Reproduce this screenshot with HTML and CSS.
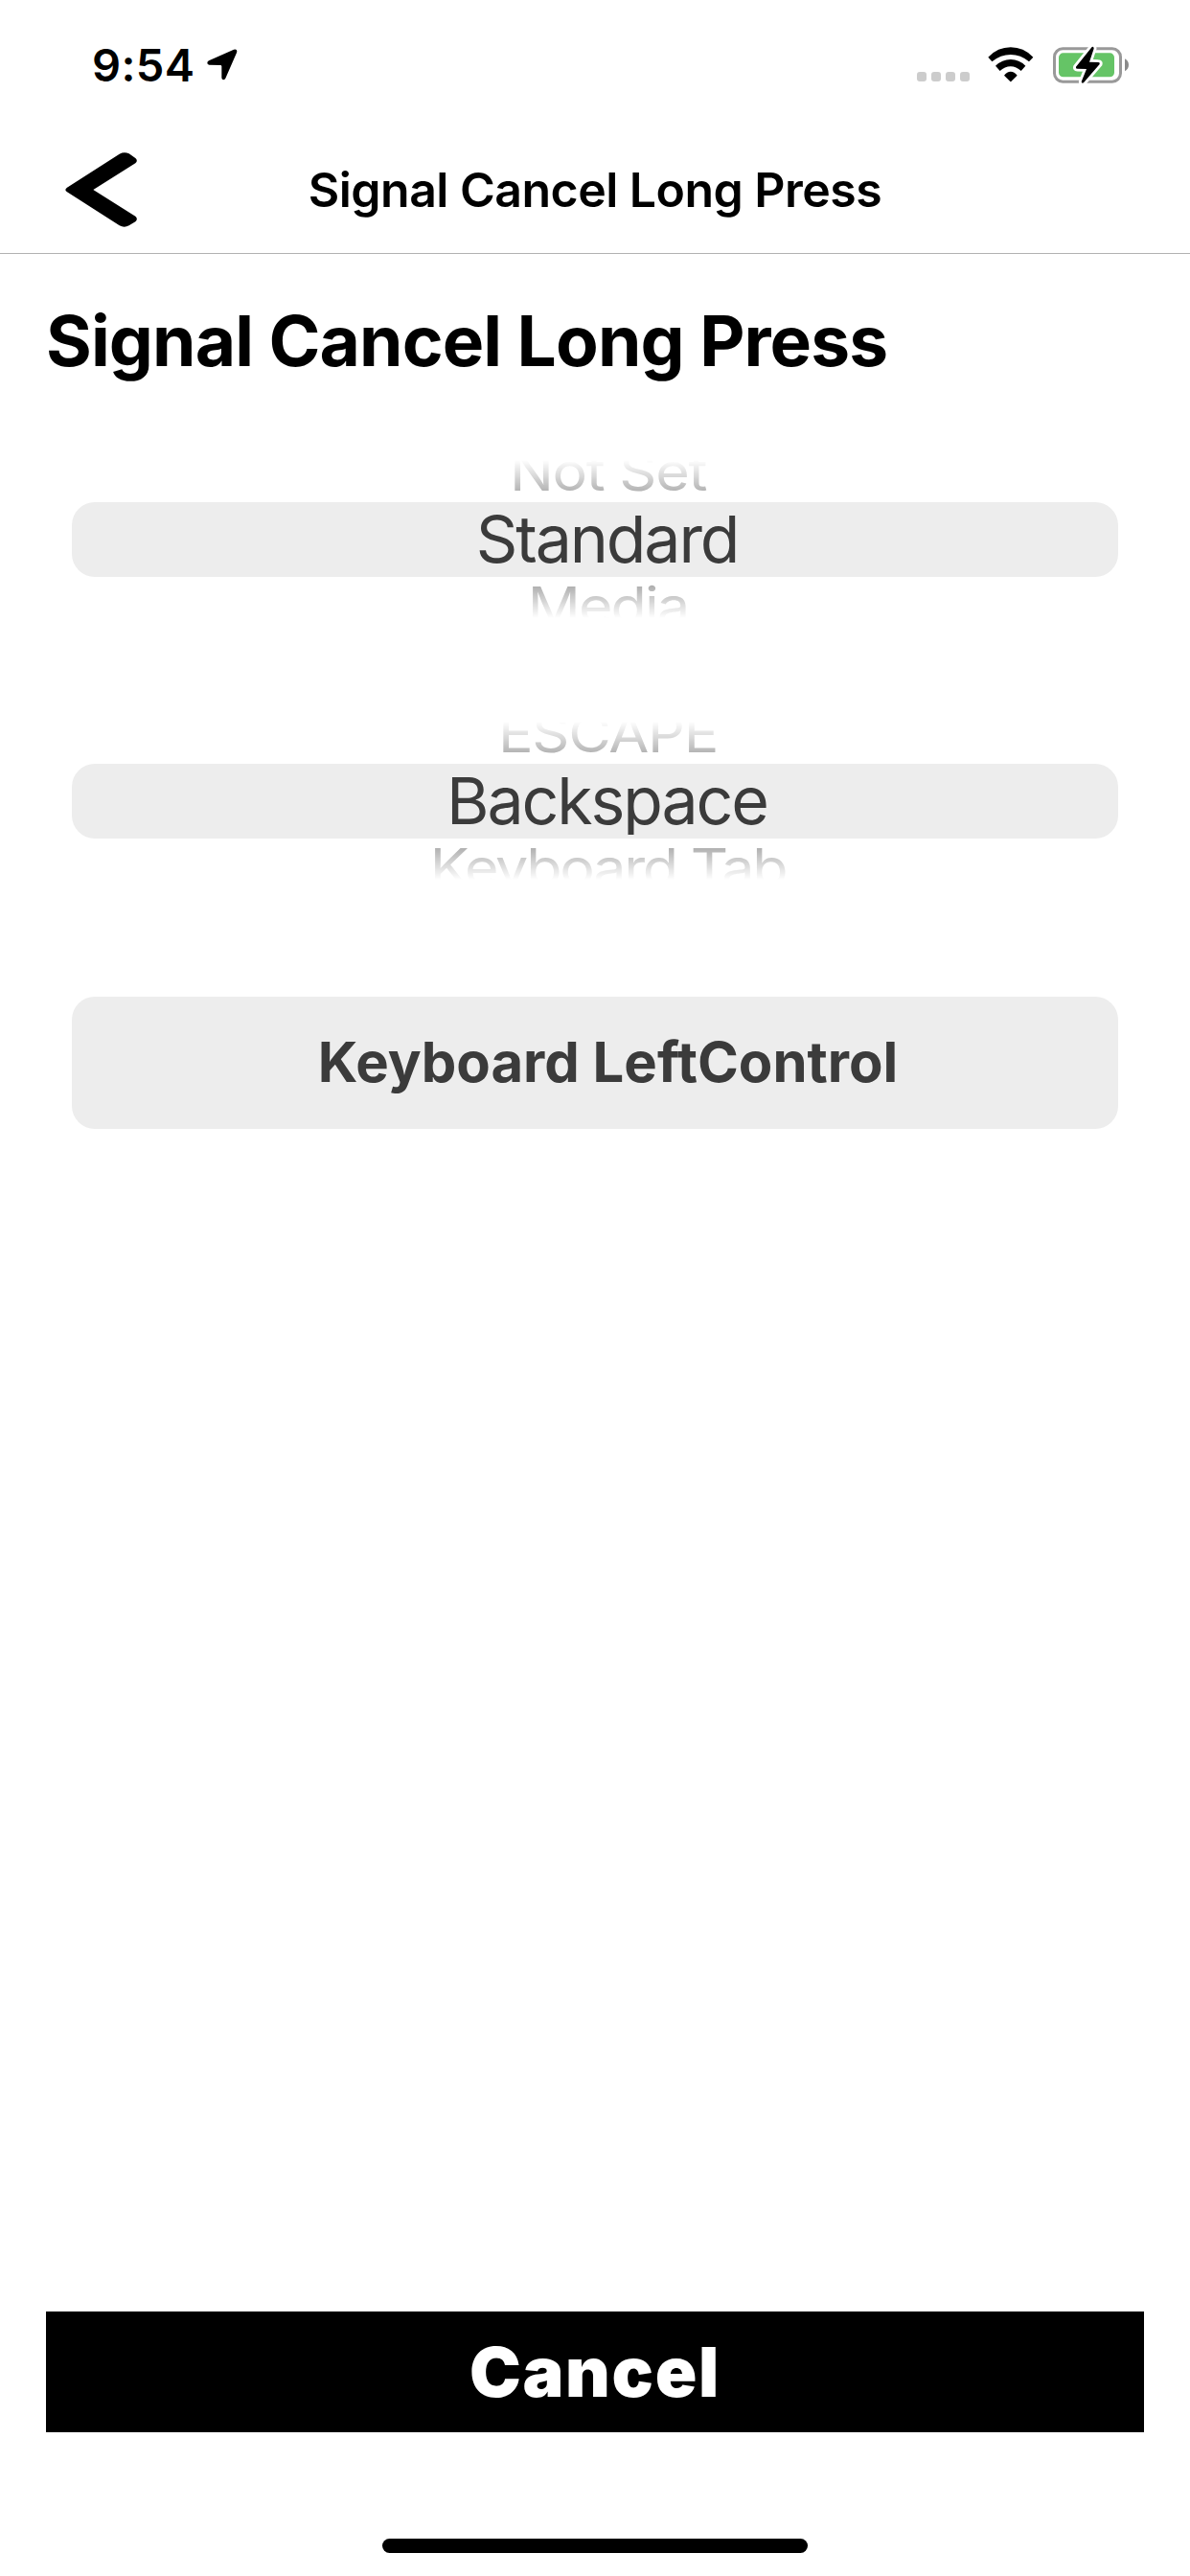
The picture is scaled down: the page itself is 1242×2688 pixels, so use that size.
FILE: index.html
```html
<!DOCTYPE html>
<html lang="en">
<head>
<meta charset="utf-8">
<title>Signal Cancel Long Press</title>
<link rel="stylesheet" href="styles.css">
</head>
<body>
<div class="screen">
  <div class="status-bar">
    <div class="status-left">
      <span class="time">9:54</span>
      <svg class="location-icon" viewBox="524 92 96 99" aria-hidden="true"><path d="M608 94 Q621 91 617 104 L582 184 Q579 189 575 189 Q570 188 570 182 L570 147 Q570 143 566 143 L531 142 Q525 140 525 136 Q525 131 530 129 Z"/></svg>
    </div>
    <div class="status-right">
      <div class="cell-dots"><i></i><i></i><i></i><i></i></div>
      <svg class="wifi-icon" viewBox="305 86 144 111" aria-hidden="true">
        <path d="M306 118 Q336 87 376.500 87 Q417 87 447 118 L434 132 Q408 110 376.500 110 Q345 110 318 132 Z"/>
        <path d="M329 145 Q350 125 376.500 125 Q403 125 423 145 L409 161 Q394 147 376.500 147 Q358 147 343 161 Z"/>
        <path d="M356 175 Q365 163 376.500 163 Q388 163 397 175 L378 194 Q376.500 195.500 375 194 Z"/>
      </svg>
      <svg class="battery-icon" viewBox="507 83 238 120" aria-hidden="true">
        <rect x="511.500" y="91.500" width="207" height="103" rx="26" fill="none" stroke="#999" stroke-width="9"/>
        <rect x="525" y="105" width="174" height="75" rx="14" fill="#65c466"/>
        <path d="M732 123 Q744 130 744 142.500 Q744 155 732 162 Z" fill="#8a8a8a"/>
        <path d="M629 86 L579 148 Q577 154 583 154 L612 155 L596 195 Q597 201 603 198 L653 140 Q655 134 649 134 L621 133 L635 91 Q635 84 629 86 Z" stroke="#fff" stroke-width="17" stroke-linejoin="round" paint-order="stroke"/>
      </svg>
    </div>
  </div>

  <header class="nav-bar">
    <svg class="back-icon" viewBox="83 417 226 234" aria-label="Back"><path d="M89 527 L253 422 Q268 414 283 421 L303 435 Q312 443 303 451 L171 534 L303 617 Q312 625 303 634 L283 646 Q268 654 253 646 L89 541 Q79 534 89 527 Z"/></svg>
    <span class="nav-title">Signal Cancel Long Press</span>
  </header>

  <main class="content">
    <h1 class="heading">Signal Cancel Long Press</h1>

    <div class="wheel">
      <div class="wheel-prev"><span class="short">Not Set</span></div>
      <div class="wheel-selected"><span>Standard</span></div>
      <div class="wheel-next"><span class="medium">Media</span></div>
    </div>

    <div class="wheel">
      <div class="wheel-prev"><span class="short">ESCAPE</span></div>
      <div class="wheel-selected"><span>Backspace</span></div>
      <div class="wheel-next"><span class="long">Keyboard Tab</span></div>
    </div>

    <div class="modifier">Keyboard LeftControl</div>

    <button class="cancel">Cancel</button>
  </main>

  <div class="home-indicator"></div>
</div>
</body>
</html>
```
FILE: styles.css
```css
* { box-sizing: border-box; }

body {
  margin: 0;
  background: #fff;
  color: #000;
  font-family: Inter, "Liberation Sans", sans-serif;
}

.screen {
  display: flex;
  flex-direction: column;
  width: 1242px;
  height: 2688px;
  overflow: hidden;
}

svg { display: block; }

.status-bar {
  display: flex;
  justify-content: space-between;
  height: 132px;
  padding: 0 64px 0 96px;
}

.status-left {
  display: flex;
  align-items: center;
  gap: 12px;
  height: 135px;
}

.time {
  font-size: 47px;
  font-weight: 600;
  letter-spacing: 0.4px;
}

.location-icon { width: 32px; height: 33px; }

.status-right {
  display: flex;
  align-items: flex-start;
  padding-top: 48px;
}

.cell-dots {
  display: flex;
  gap: 5px;
  margin: 27px 19.500px 0 0;
}

.cell-dots i {
  width: 10px;
  height: 10px;
  border-radius: 3px;
  background: #ccc;
}

.wifi-icon { width: 48px; height: 37px; margin: 0.670px 19.330px 0 0; }
.battery-icon { width: 79.330px; height: 40px; }

.nav-bar {
  display: grid;
  grid-template-columns: 159px 1fr 159px;
  align-items: center;
  height: 133px;
  border-bottom: 1px solid #b2b2b2;
}

.back-icon {
  width: 75.330px;
  height: 78px;
  margin-left: 67.670px;
}

.nav-title {
  text-align: center;
  font-size: 50px;
  font-weight: 600;
  letter-spacing: -0.530px;
}

.content {
  display: flex;
  flex: 1;
  flex-direction: column;
  padding: 0 48px;
}

.heading {
  margin: 41px 0 74px;
  font-size: 73px;
  line-height: 100px;
  font-weight: 700;
  letter-spacing: -0.880px;
}

.wheel {
  height: 165px;
  margin: 0 27px 108px;
  overflow: hidden;
  text-align: center;
  white-space: nowrap;
}

.wheel span { display: inline-block; }

.wheel-prev,
.wheel-next {
  padding-left: 27px;
  color: #999;
  font-size: 61px;
}

.wheel-prev span,
.wheel-next span { transform: scaleY(0.9); }

.wheel-prev {
  height: 44px;
  line-height: 24px;
  -webkit-mask-image: linear-gradient(to top, #000, transparent);
  mask-image: linear-gradient(to top, #000, transparent);
}

.wheel-next {
  height: 43px;
  line-height: 60px;
  -webkit-mask-image: linear-gradient(#000, transparent);
  mask-image: linear-gradient(#000, transparent);
}

.short { letter-spacing: -1.300px; }
.medium { letter-spacing: -1.900px; }
.long { letter-spacing: -2.300px; }

.wheel-selected {
  height: 78px;
  padding-left: 25px;
  border-radius: 24px;
  background: #ededed;
  color: #3b3b3b;
  font-size: 68px;
  line-height: 77px;
  letter-spacing: -2.100px;
}

.wheel-selected span { clip-path: inset(0 0 3px); }

.modifier {
  height: 138px;
  margin: 14px 27px 0;
  padding-left: 27px;
  border-radius: 24px;
  background: #ededed;
  color: #3b3b3b;
  font-size: 58px;
  font-weight: 700;
  line-height: 137px;
  text-align: center;
}

.cancel {
  height: 126px;
  margin: auto 0 0;
  padding: 0;
  border: 0;
  background: #000;
  color: #fff;
  font: 900 72px/126px Inter, "Liberation Sans", sans-serif;
  letter-spacing: 1.700px;
}

.home-indicator {
  width: 444px;
  height: 15px;
  margin: 111px auto 24px;
  border-radius: 8px;
  background: #000;
}
```
